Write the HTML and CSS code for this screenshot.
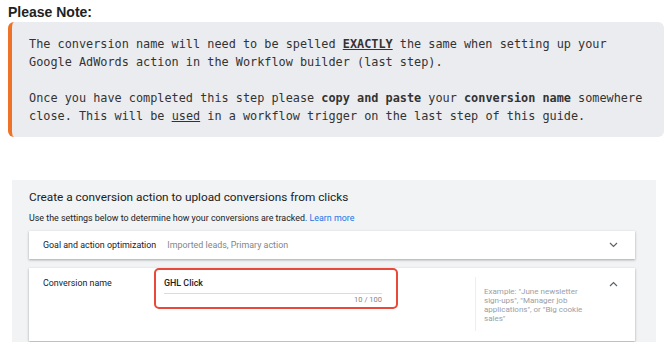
FILE: index.html
```html
<!DOCTYPE html>
<html lang="en">
<head>
    <meta charset="UTF-8">
    <meta name="viewport" content="width=device-width, initial-scale=1.0">
    <title>Please Note - Conversion name</title>
    <link rel="stylesheet" href="styles.css">
</head>
<body>

<div class="note-label">Please Note:</div>

<div class="note">
    <p>The conversion name will need to be spelled <b><u>EXACTLY</u></b> the same when setting up your<br>Google AdWords action in the Workflow builder (last step).</p>
    <p>Once you have completed this step please <b>copy and paste</b> your <b>conversion name</b> somewhere<br>close. This will be <u>used</u> in a workflow trigger on the last step of this guide.</p>
</div>

<div class="shot">
    <h2>Create a conversion action to upload conversions from clicks</h2>
    <p class="sub">Use the settings below to determine how your conversions are tracked. <a href="#">Learn more</a></p>

    <div class="card goal">
        <span class="label">Goal and action optimization</span>
        <span class="value">Imported leads, Primary action</span>
        <svg class="chev" width="9" height="6" viewBox="0 0 9 6"><polyline points="1,1 4.5,4.5 8,1" fill="none" stroke="#5f6368" stroke-width="1.2"/></svg>
    </div>

    <div class="card name">
        <span class="label">Conversion name</span>
        <div class="input-box">
            <div class="input-text">GHL Click</div>
            <div class="counter">10 / 100</div>
        </div>
        <div class="hint">Example: "June newsletter sign-ups", "Manager job applications", or "Big cookie sales"</div>
        <svg class="chev" width="9" height="6" viewBox="0 0 9 6"><polyline points="1,5 4.5,1.5 8,5" fill="none" stroke="#5f6368" stroke-width="1.2"/></svg>
    </div>
</div>

</body>
</html>
```

FILE: styles.css
```css
body {
    margin: 0;
    padding: 0;
    background-color: #fff;
    font-family: 'Liberation Sans', Arial, sans-serif;
}
.note-label {
    font-size: 14px;
    font-weight: bold;
    color: #222;
    padding: 3px 0 1px 8px;
    line-height: 18px;
}
.note {
    margin: 0 2px 0 8px;
    background: #ebecef;
    border-left: 4px solid #ee7328;
    border-radius: 6px;
    padding: 13px 10px 12px 17px;
    font-family: 'DejaVu Sans Mono', monospace;
    font-size: 11.85px;
    line-height: 18px;
    color: #333;
}
.note p {
    margin: 0 0 18px 0;
}
.note p:last-child {
    margin-bottom: 0;
}
.shot {
    margin: 43px 10px 0 12px;
    background: #f1f3f4;
    padding: 7px 21px 1px 17px;
    font-family: Roboto, sans-serif;
    color: #3c4043;
}
.shot h2 {
    margin: 0;
    font-size: 11.8px;
    font-weight: 400;
    line-height: 20px;
    color: #202124;
}
.sub {
    margin: 0 0 2px 0;
    font-size: 8.9px;
    line-height: 22px;
    color: #202124;
}
.sub a {
    color: #1a73e8;
    text-decoration: none;
}
.card {
    background: #fff;
    box-shadow: 0 1px 2px rgba(60, 64, 67, 0.3), 0 1px 3px rgba(60, 64, 67, 0.15);
    display: flex;
    font-size: 8.9px;
}
.goal {
    height: 28px;
    align-items: center;
    padding: 0 17px 0 14px;
    margin-bottom: 9px;
}
.goal .label {
    color: #202124;
    margin-right: 11px;
}
.goal .value {
    color: #80868b;
    flex: 1;
}
.name {
    height: 73px;
    align-items: flex-start;
    padding: 0 17px 0 14px;
}
.name .label {
    width: 111px;
    margin-top: 9px;
    line-height: 12px;
    color: #202124;
}
.name .chev {
    margin-top: 13px;
    margin-left: auto;
}
.input-box {
    width: 244px;
    height: 41px;
    border: 2px solid #e8493a;
    border-radius: 5px;
    padding: 0 14px 0 8px;
    box-sizing: border-box;
}
.input-text {
    font-weight: 500;
    color: #202124;
    line-height: 12px;
    padding: 7px 0 4px 0;
    border-bottom: 1px solid #dadce0;
}
.counter {
    text-align: right;
    font-size: 7.5px;
    color: #80868b;
    line-height: 10px;
    padding-top: 1px;
}
.hint {
    margin: 9px 0 0 77px;
    border-left: 1px solid #eceeef;
    padding: 9.5px 0 8.5px 8px;
    width: 104px;
    font-size: 8px;
    line-height: 9px;
    color: #9aa0a6;
    flex-shrink: 0;
}
```
